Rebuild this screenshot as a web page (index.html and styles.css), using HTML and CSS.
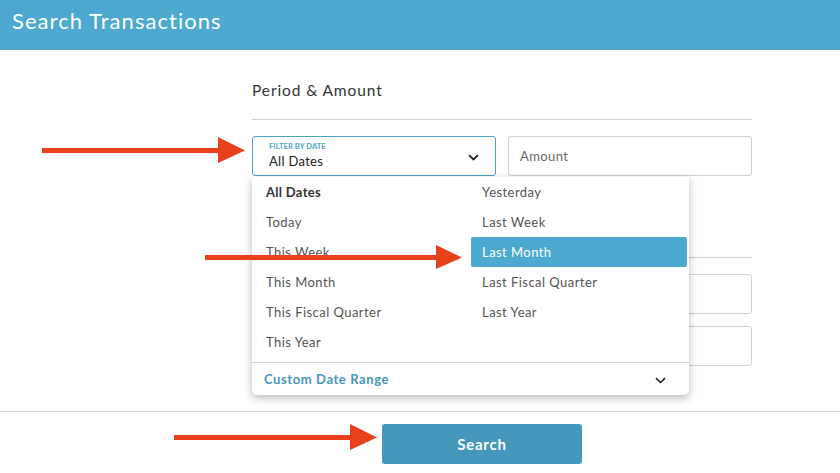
FILE: index.html
```html
<!DOCTYPE html>
<html>
<head>
<meta charset="utf-8">
<link rel="stylesheet" href="styles.css">
</head>
<body>
<header class="topbar"><h1 class="title">Search Transactions</h1></header>
<main class="content">
  <section class="panel">
    <h2 class="panel-title">Period &amp; Amount</h2>
    <div class="rule"></div>
    <div class="row">
      <div class="select-wrap">
        <div class="select">
          <div class="select-text">
            <span class="select-label">FILTER BY DATE</span>
            <span class="select-value">All Dates</span>
          </div>
          <svg class="chev" width="11" height="7" viewBox="0 0 11 7"><path d="M1 1.2 L5.5 5.5 L10 1.2" fill="none" stroke="#222" stroke-width="1.8"/></svg>
        </div>
        <div class="dropdown">
          <div class="options">
            <div class="col">
              <div class="opt opt-bold">All Dates</div>
              <div class="opt">Today</div>
              <div class="opt">This Week</div>
              <div class="opt">This Month</div>
              <div class="opt">This Fiscal Quarter</div>
              <div class="opt">This Year</div>
            </div>
            <div class="col">
              <div class="opt">Yesterday</div>
              <div class="opt">Last Week</div>
              <div class="opt opt-active">Last Month</div>
              <div class="opt">Last Fiscal Quarter</div>
              <div class="opt">Last Year</div>
            </div>
          </div>
          <div class="custom">
            <span>Custom Date Range</span>
            <svg width="11" height="7" viewBox="0 0 11 7"><path d="M1 1.2 L5.5 5.5 L10 1.2" fill="none" stroke="#222" stroke-width="1.6"/></svg>
          </div>
        </div>
      </div>
      <div class="input"><span class="placeholder">Amount</span></div>
    </div>
    <div class="rule rule-second"></div>
    <div class="row">
      <div class="input"></div>
      <div class="input"></div>
    </div>
    <div class="row row-next">
      <div class="input"></div>
      <div class="input"></div>
    </div>
  </section>
</main>
<footer class="footer">
  <button class="search-btn">Search</button>
</footer>

<svg class="arrow arrow-1" width="210" height="30" viewBox="0 0 210 30"><rect x="0" y="11" width="180" height="5" fill="#e9401c"/><polygon points="176,0 203,13.5 176,26" fill="#e9401c"/></svg>
<svg class="arrow arrow-2" width="265" height="30" viewBox="0 0 265 30"><rect x="0" y="10" width="235" height="5" fill="#e9401c"/><polygon points="231,0 257,12.5 231,24" fill="#e9401c"/></svg>
<svg class="arrow arrow-3" width="210" height="30" viewBox="0 0 210 30"><rect x="0" y="11" width="180" height="5" fill="#e9401c"/><polygon points="176,0 203,13.5 176,26" fill="#e9401c"/></svg>
</body>
</html>
```
FILE: styles.css
```css
* { box-sizing: border-box; }
html, body { margin: 0; padding: 0; background: #fff; }
body {
  font-family: "Lato", "Liberation Sans", sans-serif;
  color: #333;
  position: relative;
  width: 840px;
  height: 473px;
  overflow: hidden;
}
.topbar {
  height: 50px;
  background: #4ea9d0;
  display: flex;
  align-items: center;
  padding-left: 12px;
}
.title {
  margin: 0;
  font-size: 22px;
  font-weight: 400;
  color: #fff;
  letter-spacing: 1.05px;
  line-height: 26px;
  margin-top: -8px;
}
.content {
  padding-left: 252px;
}
.panel {
  width: 500px;
}
.panel-title {
  margin: 30px 0 0;
  font-size: 15.5px;
  line-height: 20px;
  font-weight: 400;
  color: #333;
  letter-spacing: 0.9px;
}
.rule {
  height: 1px;
  background: #cfcfcf;
  margin-top: 19px;
}
.rule-second { margin-top: 81px; }
.row {
  display: flex;
  gap: 12px;
  margin-top: 16px;
}
.row-next { margin-top: 12px; }
.select-wrap {
  position: relative;
  width: 244px;
}
.select {
  height: 40px;
  border: 1px solid #4ca3c9;
  border-radius: 3px;
  display: flex;
  align-items: center;
  justify-content: space-between;
  padding: 0 16px 0 16px;
}
.select-text {
  display: flex;
  flex-direction: column;
  margin-top: -1px;
}
.select-label {
  font-size: 7.5px;
  font-weight: 700;
  color: #4ca3c9;
  line-height: 9px;
  letter-spacing: 0.1px;
}
.select-value {
  font-size: 13px;
  color: #222;
  line-height: 16px;
  margin-top: 2px;
  letter-spacing: 0.3px;
}
.chev { margin-top: 2px; }
.input {
  width: 244px;
  height: 40px;
  border: 1px solid #cfcfcf;
  border-radius: 3px;
  display: flex;
  align-items: center;
  padding-left: 11px;
}
.placeholder {
  font-size: 13px;
  color: #666;
  letter-spacing: 0.4px;
}
.dropdown {
  position: absolute;
  top: 41px;
  left: 0;
  width: 437px;
  background: #fff;
  border-radius: 0 0 5px 5px;
  box-shadow: 0 3px 9px rgba(0,0,0,0.28);
  z-index: 5;
}
.options {
  display: grid;
  grid-template-columns: 217px 216px;
  padding: 0 2px 5px;
}
.opt {
  height: 30px;
  display: flex;
  align-items: center;
  padding-left: 12px;
  font-size: 13px;
  color: #555;
  letter-spacing: 0.45px;
  border-radius: 2px;
}
.col:last-child .opt { padding-left: 11px; }
.opt-bold { font-weight: 700; color: #333; letter-spacing: 0.3px; }
.opt-active { background: #4ca9cf; color: #fff; }
.custom {
  border-top: 1px solid #cfcfcf;
  height: 33px;
  display: flex;
  align-items: center;
  justify-content: space-between;
  padding: 0 23px 0 12px;
  font-size: 13px;
  font-weight: 700;
  color: #4597bb;
  letter-spacing: 0.6px;
}
.custom svg { margin-top: 2px; }
.footer {
  margin-top: 45px;
  border-top: 1px solid #cfcfcf;
  padding: 12px 0 0 382px;
}
.search-btn {
  width: 200px;
  height: 40px;
  border: none;
  border-radius: 3px;
  background: #4597bb;
  color: #fff;
  font-family: "Lato", "Liberation Sans", sans-serif;
  font-size: 15px;
  font-weight: 700;
  letter-spacing: 0.8px;
  padding: 0;
}
.arrow { position: absolute; z-index: 10; }
.arrow-1 { left: 42px; top: 137px; }
.arrow-2 { left: 205px; top: 245px; }
.arrow-3 { left: 174px; top: 424px; }
```
